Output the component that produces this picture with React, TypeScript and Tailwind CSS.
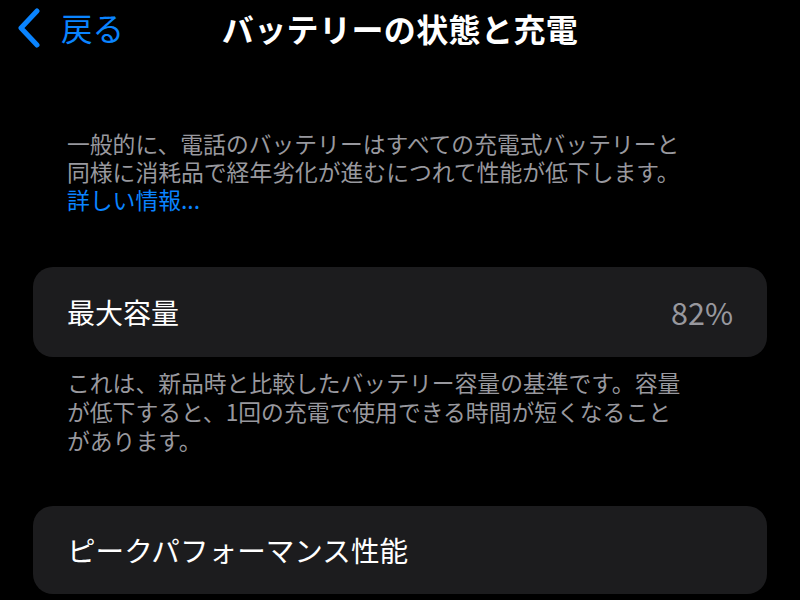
import React from 'react';

const font = { fontFamily: '"Noto Sans CJK JP", "Noto Sans", sans-serif' };

const ChevronLeft: React.FC = () => (
  <svg width="26" height="40" viewBox="0 0 26 40" fill="none">
    <path
      d="M21 3 L5 20 L21 37"
      stroke="#0a84ff"
      strokeWidth="5"
      strokeLinecap="round"
      strokeLinejoin="round"
    />
  </svg>
);

const App: React.FC = () => {
  return (
    <div className="w-[800px] h-[600px] overflow-hidden bg-black text-white" style={font}>
      {/* nav bar */}
      <div className="grid grid-cols-[1fr_auto_1fr] items-center h-[56px]">
        <div className="flex items-center pl-[16px]">
          <ChevronLeft />
          <span className="ml-[19px] text-[31.5px] leading-none text-[#0a84ff]">戻る</span>
        </div>
        <h1 className="text-[32px] font-bold leading-none tracking-[0.4px]">
          バッテリーの状態と充電
        </h1>
        <div />
      </div>

      <div className="pt-[74px] pl-[67px] w-[690px] text-[22.8px] leading-[28px] text-[#98989e]">
        <p>一般的に、電話のバッテリーはすべての充電式バッテリーと同様に消耗品で経年劣化が進むにつれて性能が低下します。</p>
        <p className="text-[#0a84ff]">詳しい情報...</p>
      </div>

      <div className="mt-[53px] mx-[33px] h-[90px] rounded-[20px] bg-[#1c1c1e] flex items-center justify-between pl-[34px] pr-[34px]">
        <span className="text-[28px] leading-none">最大容量</span>
        <span className="text-[30.5px] leading-none text-[#98989e]">82%</span>
      </div>

      <div className="mt-[11px] pl-[67px] w-[690px] text-[22.8px] leading-[29px] text-[#98989e]">
        これは、新品時と比較したバッテリー容量の基準です。容量が低下すると、1回の充電で使用できる時間が短くなることがあります。
      </div>

      <div className="mt-[51px] mx-[33px] h-[88px] rounded-[20px] bg-[#1c1c1e] flex items-center pl-[34px]">
        <span className="text-[28.6px] leading-none">ピークパフォーマンス性能</span>
      </div>
    </div>
  );
};

export default App;
